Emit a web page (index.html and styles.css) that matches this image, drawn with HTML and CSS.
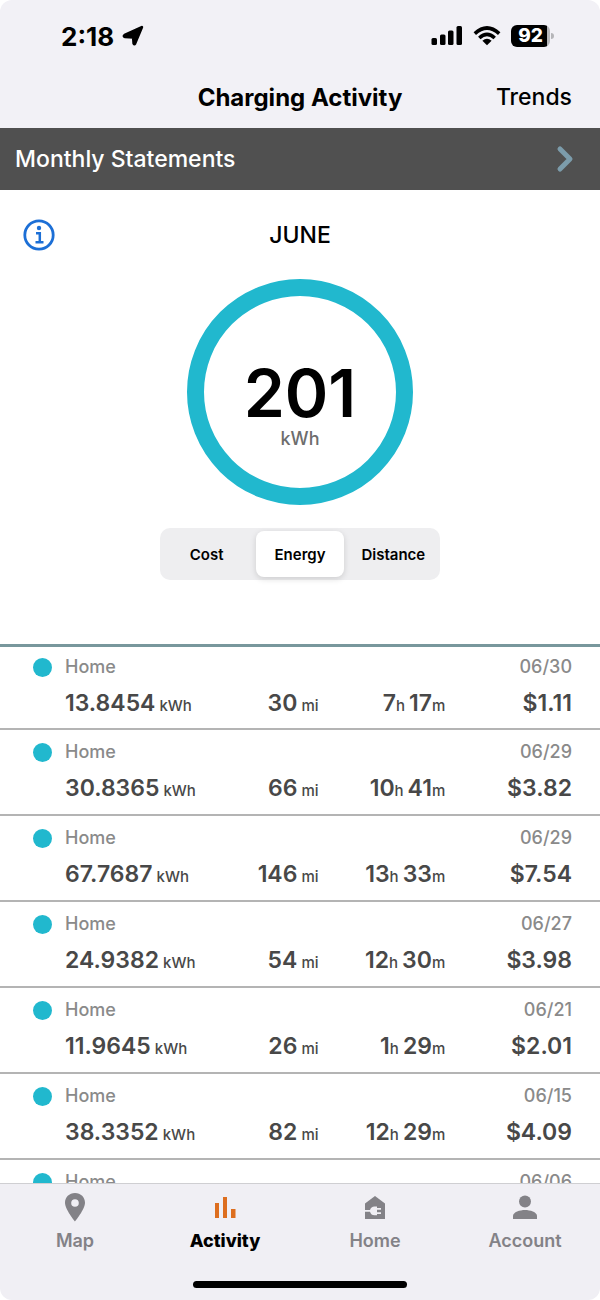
FILE: index.html
```html
<!DOCTYPE html>
<html lang="en">
<head>
    <meta charset="UTF-8">
    <meta name="viewport" content="width=device-width, initial-scale=1.0">
    <title>Charging Activity</title>
    <link rel="stylesheet" href="styles.css">
</head>
<body>
    <div class="app">
        <header class="header">
            <div class="status-bar">
                <div class="status-left">
                    <span>2:18</span>
                    <svg width="22" height="22" viewBox="0 0 22 22"><path d="M19.800 2.200 L13 18.500 Q12.200 20 11.700 18.300 L11.300 12.300 L3 11.800 Q1 11.300 2.700 10 Z" fill="#000" stroke="#000" stroke-width="2.800" stroke-linejoin="round"/></svg>
                </div>
                <div class="status-right">
                    <svg width="32" height="20" viewBox="0 0 32 20">
                        <rect x="0.500" y="12" width="5.500" height="7" rx="1.500"/>
                        <rect x="9" y="8.500" width="5.500" height="10.500" rx="1.500"/>
                        <rect x="17" y="4.500" width="5.500" height="14.500" rx="1.500"/>
                        <rect x="25.500" y="0" width="5.500" height="19" rx="1.500"/>
                    </svg>
                    <svg width="28" height="20" viewBox="0 0 28 20" fill="none" stroke="#000" stroke-width="3.600">
                        <path d="M1.800 7.600 Q14 -3.600 26.200 7.600"/>
                        <path d="M6.300 12 Q14 4.800 21.700 12"/>
                        <path d="M9.400 14.800 Q14 10.800 18.600 14.800 L14 19.300 Z" fill="#000" stroke="none"/>
                    </svg>
                    <span class="battery">92</span>
                </div>
            </div>
            <div class="title-bar">
                <h1>Charging Activity</h1>
                <button class="trends" type="button">Trends</button>
            </div>
        </header>

        <a class="statements" href="#">
            <span>Monthly Statements</span>
            <svg width="18" height="28" viewBox="0 0 18 28"><path d="M4 4 L14 14 L4 24" fill="none" stroke="#7c9cab" stroke-width="5" stroke-linecap="round" stroke-linejoin="round"/></svg>
        </a>

        <section class="summary">
            <div class="month-row">
                <button class="info" type="button" aria-label="Info">
                    <svg width="32" height="32" viewBox="0 0 32 32">
                        <circle cx="16" cy="16" r="14.200" fill="none" stroke="#1c6fd6" stroke-width="2.800"/>
                        <circle cx="16" cy="9" r="2.200" fill="#1c6fd6"/>
                        <path d="M13 14.300 H16.800 V23.300 M12.500 23.300 H20.500" fill="none" stroke="#1c6fd6" stroke-width="2.500"/>
                    </svg>
                </button>
                <h2>JUNE</h2>
            </div>
            <div class="ring">
                <span class="ring-value">201</span>
                <span class="ring-unit">kWh</span>
            </div>
            <div class="segments">
                <button type="button">Cost</button>
                <button class="active" type="button">Energy</button>
                <button type="button">Distance</button>
            </div>
        </section>

        <ul class="sessions">
            <li>
                <div class="session-top"><span class="dot"></span><span>Home</span><span>06/30</span></div>
                <div class="session-data"><span>13.8454<small> kWh</small></span><span>30<small> mi</small></span><span>7<small>h </small>17<small>m</small></span><span>$1.11</span></div>
            </li>
            <li>
                <div class="session-top"><span class="dot"></span><span>Home</span><span>06/29</span></div>
                <div class="session-data"><span>30.8365<small> kWh</small></span><span>66<small> mi</small></span><span>10<small>h </small>41<small>m</small></span><span>$3.82</span></div>
            </li>
            <li>
                <div class="session-top"><span class="dot"></span><span>Home</span><span>06/29</span></div>
                <div class="session-data"><span>67.7687<small> kWh</small></span><span>146<small> mi</small></span><span>13<small>h </small>33<small>m</small></span><span>$7.54</span></div>
            </li>
            <li>
                <div class="session-top"><span class="dot"></span><span>Home</span><span>06/27</span></div>
                <div class="session-data"><span>24.9382<small> kWh</small></span><span>54<small> mi</small></span><span>12<small>h </small>30<small>m</small></span><span>$3.98</span></div>
            </li>
            <li>
                <div class="session-top"><span class="dot"></span><span>Home</span><span>06/21</span></div>
                <div class="session-data"><span>11.9645<small> kWh</small></span><span>26<small> mi</small></span><span>1<small>h </small>29<small>m</small></span><span>$2.01</span></div>
            </li>
            <li>
                <div class="session-top"><span class="dot"></span><span>Home</span><span>06/15</span></div>
                <div class="session-data"><span>38.3352<small> kWh</small></span><span>82<small> mi</small></span><span>12<small>h </small>29<small>m</small></span><span>$4.09</span></div>
            </li>
            <li>
                <div class="session-top"><span class="dot"></span><span>Home</span><span>06/06</span></div>
            </li>
        </ul>

        <footer class="footer">
            <nav class="tabs">
                <a href="#">
                    <svg width="32" height="32" viewBox="0 0 32 32"><path fill-rule="evenodd" d="M16 2 C10.200 2 6 6.300 6 11.800 C6 18.500 16 30.500 16 30.500 C16 30.500 26 18.500 26 11.800 C26 6.300 21.800 2 16 2 Z M16 8.200 A3.800 3.800 0 1 1 16 15.800 A3.800 3.800 0 1 1 16 8.200 Z"/></svg>
                    Map
                </a>
                <a class="active" href="#">
                    <svg width="32" height="32" viewBox="0 0 32 32"><path fill="#dd6e1f" d="M6 12 h4 v15 h-4 Z M14 6 h4 v21 h-4 Z M22 18 h4.500 v9 h-4.500 Z"/></svg>
                    Activity
                </a>
                <a href="#">
                    <svg width="32" height="32" viewBox="0 0 32 32">
                        <path d="M16 5 L26 12.500 V28 H6 V12.500 Z"/>
                        <path fill="#f0eff4" d="M5.500 19 H11 Q12 15.500 15.500 15.500 H18 V17 H22 V18.700 H18 V21.200 H22 V22.900 H18 V24.300 H15.500 Q12 24.300 11 20.800 H5.500 Z"/>
                    </svg>
                    Home
                </a>
                <a href="#">
                    <svg width="32" height="32" viewBox="0 0 32 32"><circle cx="16" cy="10.500" r="6"/><path d="M4 28 V25 C4 21 11 19 16 19 C21 19 28 21 28 25 V28 Z"/></svg>
                    Account
                </a>
            </nav>
            <div class="home-indicator"></div>
        </footer>
    </div>
</body>
</html>
```
FILE: styles.css
```css
* {
    box-sizing: border-box;
}
body {
    margin: 0;
    background-color: white;
    font-family: Inter, "Liberation Sans", sans-serif;
    color: #000;
}
a {
    color: inherit;
    text-decoration: none;
}
button {
    font-family: inherit;
    color: inherit;
    background: none;
    border: none;
    padding: 0;
    cursor: pointer;
}
.app {
    display: flex;
    flex-direction: column;
    height: 100vh;
    border-radius: 12px;
    overflow: hidden;
}
.header {
    background-color: #f2f1f6;
    padding-top: 20px;
}
.status-bar {
    display: flex;
    justify-content: space-between;
    align-items: center;
    height: 32px;
    padding: 0 50px 0 61px;
}
.status-left,
.status-right {
    display: flex;
    align-items: center;
    gap: 8px;
    font-size: 26px;
    font-weight: 700;
}
.status-right {
    gap: 10px;
}
.battery {
    position: relative;
    width: 39px;
    height: 22px;
    border-radius: 6px;
    background: linear-gradient(to right, #000 92%, #b5b5b8 92%);
    color: white;
    font-size: 19px;
    font-weight: 800;
    line-height: 22px;
    text-align: center;
}
.battery::after {
    content: "";
    position: absolute;
    left: 40px;
    top: 8px;
    width: 3px;
    height: 6px;
    border-radius: 0 3px 3px 0;
    background-color: #b5b5b8;
}
.title-bar {
    display: grid;
    grid-template-columns: 1fr auto 1fr;
    align-items: center;
    height: 76px;
    padding: 14px 28px 0;
}
h1 {
    grid-column: 2;
    margin: 0;
    font-size: 24px;
    font-weight: 700;
}
.trends {
    justify-self: end;
    font-size: 23px;
    font-weight: 500;
}
.statements {
    display: flex;
    justify-content: space-between;
    align-items: center;
    height: 62px;
    padding: 0 26px 0 15px;
    background-color: #505050;
    color: white;
    font-size: 23px;
    font-weight: 500;
}
.summary {
    display: flex;
    flex-direction: column;
    align-items: center;
    padding: 29px 23px 64px;
}
.month-row {
    display: grid;
    grid-template-columns: 1fr auto 1fr;
    align-items: center;
    width: 100%;
    height: 32px;
}
.info {
    justify-self: start;
    height: 32px;
}
h2 {
    margin: 0;
    font-size: 23px;
    font-weight: 500;
}
.ring {
    display: flex;
    flex-direction: column;
    align-items: center;
    gap: 3px;
    width: 226px;
    height: 226px;
    margin-top: 28px;
    padding-top: 64px;
    border: 17px solid #21b8ce;
    border-radius: 50%;
}
.ring-value {
    font-size: 66px;
    font-weight: 600;
    line-height: 66px;
}
.ring-unit {
    color: #6d6d6d;
    font-size: 18px;
    font-weight: 500;
    line-height: 20px;
}
.segments {
    display: grid;
    grid-template-columns: repeat(3, 1fr);
    gap: 6px;
    width: 280px;
    height: 52px;
    margin-top: 23px;
    padding: 3px;
    border-radius: 10px;
    background-color: #eeeef0;
}
.segments button {
    border-radius: 8px;
    font-size: 15px;
    font-weight: 600;
}
.segments .active {
    background-color: white;
    box-shadow: 0 2px 6px rgba(0, 0, 0, 0.14);
}
.sessions {
    flex: 1;
    min-height: 0;
    margin: 0;
    padding: 0;
    overflow: hidden;
    list-style: none;
    border-top: 3px solid #78979c;
}
.sessions li {
    height: 86px;
    padding: 9px 28px 0 33px;
    border-bottom: 2px solid #b4b4b4;
}
.sessions li:first-child {
    height: 83px;
    padding-top: 7px;
}
.session-top {
    display: grid;
    grid-template-columns: 19px 1fr auto;
    gap: 13px;
    align-items: center;
    color: #8a8a8a;
    font-size: 18px;
    font-weight: 500;
    line-height: 26px;
}
.dot {
    width: 19px;
    height: 19px;
    border-radius: 50%;
    background-color: #21b8ce;
}
.session-data {
    display: grid;
    grid-template-columns: 6fr 4fr 5fr 5fr;
    margin-top: 8px;
    padding-left: 32px;
    color: #484848;
    font-size: 23px;
    font-weight: 600;
    line-height: 30px;
    white-space: nowrap;
}
.session-data span {
    text-align: right;
}
.session-data span:first-child {
    text-align: left;
}
.session-data small {
    font-size: 15px;
    font-weight: 500;
}
.footer {
    height: 117px;
    padding-top: 7px;
    background-color: #f0eff4;
    border-top: 1px solid #cfcfd2;
}
.tabs {
    display: grid;
    grid-template-columns: repeat(4, 1fr);
}
.tabs a {
    display: flex;
    flex-direction: column;
    align-items: center;
    gap: 6px;
    color: #838287;
    font-size: 18px;
    font-weight: 600;
    line-height: 24px;
}
.tabs svg {
    fill: #838287;
}
.tabs .active {
    color: #000;
    font-weight: 800;
}
.home-indicator {
    width: 214px;
    height: 7px;
    margin: 28px auto 0;
    border-radius: 4px;
    background-color: #000;
}
```
